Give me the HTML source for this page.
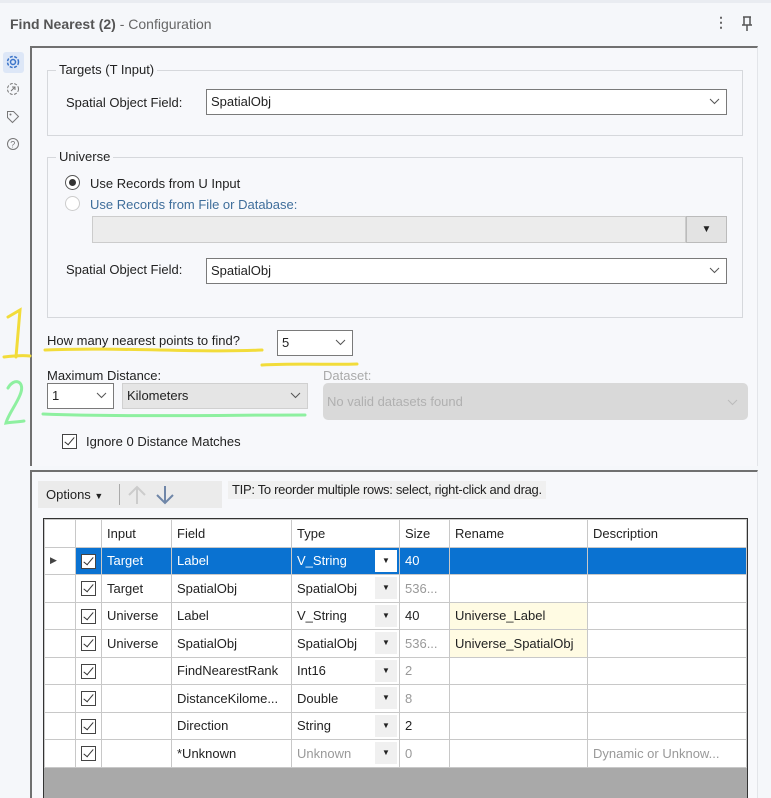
<!DOCTYPE html>
<html><head><meta charset="utf-8"><style>
*{box-sizing:border-box}
body{margin:0;width:771px;height:798px;overflow:hidden;background:#f5f7fa;font-family:"Liberation Sans",sans-serif;font-size:13px;color:#222;position:relative}
.a{position:absolute}
.dd{position:absolute;background:#fff;border:1px solid #7a7a7a;padding:4px 4px;font-size:13px}
.dd svg{position:absolute;right:6px;top:8px}
.grp{position:absolute;border:1px solid #d6d8dc}
.lg{position:absolute;background:#f7f8fb;padding:0 3px;font-size:13px;top:-9px;left:8px}
table{border-collapse:collapse;font-size:13px}
td{border:1px solid #c8c8c8;height:27.5px;padding:0 5px;white-space:nowrap;overflow:hidden}
.cb{width:15px;height:15px;border:1px solid #444;display:inline-block;position:relative;background:#fff;vertical-align:middle}
.cb:after{content:"";position:absolute;left:4px;top:0px;width:4px;height:9px;border:solid #333;border-width:0 1.5px 1.5px 0;transform:rotate(40deg)}
.ty{display:flex;justify-content:space-between;align-items:center;margin-right:-3px}
.ar{width:22px;height:22px;background:#f0f0f0;text-align:center;font-size:8px;line-height:22px;color:#222}
.g{color:#999}
</style></head><body>
<div class="a" style="left:0;top:0;width:771px;height:3px;background:#e9ecf1"></div>
<div class="a" style="left:10px;top:16px;font-size:14px;color:#555"><span style="font-weight:bold;color:#555">Find Nearest (2)</span> <span style="color:#666">- Configuration</span></div>
<div class="a" style="left:714px;top:14px;color:#666;font-size:14px;font-weight:bold">&#8942;</div>
<svg class="a" style="left:740px;top:15px" width="14" height="18" viewBox="0 0 14 18"><path d="M3 2h8M4 2v8h6V2M2 10h10M7 10v6" stroke="#555" stroke-width="1.5" fill="none"/></svg>
<div class="a" style="left:3px;top:52px;width:21px;height:21px;background:#dde7f7;border-radius:3px"></div>
<svg class="a" style="left:5px;top:54px" width="16" height="16" viewBox="0 0 16 16"><circle cx="8" cy="8" r="2.5" stroke="#3b74c9" stroke-width="1.5" fill="none"/><circle cx="8" cy="8" r="5.5" stroke="#3b74c9" stroke-width="1.5" fill="none" stroke-dasharray="3 1.5"/></svg>
<svg class="a" style="left:6px;top:82px" width="14" height="14"><circle cx="7" cy="7" r="5.5" stroke="#777" fill="none" stroke-dasharray="3 1.5"/><path d="M5 9l4-4M6 5h3v3" stroke="#777" fill="none"/></svg>
<svg class="a" style="left:6px;top:110px" width="14" height="14"><path d="M1.5 1.5h6l5 5-6 6-5-5z" stroke="#777" fill="none"/><circle cx="4.5" cy="4.5" r="1" fill="#777"/></svg>
<svg class="a" style="left:6px;top:137px" width="14" height="14"><circle cx="7" cy="7" r="5.5" stroke="#777" fill="none"/><text x="4.3" y="10.5" font-size="9" fill="#777" font-family="Liberation Sans">?</text></svg>
<div class="a" style="left:30px;top:46px;width:728px;height:420px;background:#f7f8fb;border-left:2px solid #707070;border-top:2px solid #707070;border-right:1px solid #e3e5e9"></div>
<div class="grp" style="left:47px;top:70px;width:696px;height:66px"><span class="lg">Targets (T Input)</span></div>
<div class="a" style="left:66px;top:95px">Spatial Object Field:</div>
<div class="dd" style="left:206px;top:89px;width:521px;height:26px">SpatialObj<svg width="11" height="7"><path d="M1 1l4.5 4.5L10 1" stroke="#555" fill="none"/></svg></div>
<div class="grp" style="left:47px;top:157px;width:696px;height:161px"><span class="lg">Universe</span></div>
<div class="a" style="left:65px;top:175px;width:15px;height:15px;border:1px solid #555;border-radius:50%;background:#fff"><div style="margin:3px;width:7px;height:7px;border-radius:50%;background:#333"></div></div>
<div class="a" style="left:90px;top:176px">Use Records from U Input</div>
<div class="a" style="left:65px;top:196px;width:15px;height:15px;border:1px solid #ccc;border-radius:50%;background:#fff"></div>
<div class="a" style="left:90px;top:197px;color:#3f6e9b">Use Records from File or Database:</div>
<div class="a" style="left:92px;top:216px;width:594px;height:27px;background:#ececec;border:1px solid #ccc"></div>
<div class="a" style="left:686px;top:216px;width:41px;height:27px;background:#e3e3e3;border:1px solid #bbb;text-align:center;font-size:10px;line-height:25px">&#9660;</div>
<div class="a" style="left:66px;top:262px">Spatial Object Field:</div>
<div class="dd" style="left:206px;top:258px;width:521px;height:26px">SpatialObj<svg width="11" height="7"><path d="M1 1l4.5 4.5L10 1" stroke="#555" fill="none"/></svg></div>
<div class="a" style="left:47px;top:333px">How many nearest points to find?</div>
<div class="dd" style="left:277px;top:330px;width:76px;height:26px">5<svg width="11" height="7"><path d="M1 1l4.5 4.5L10 1" stroke="#555" fill="none"/></svg></div>
<svg class="a" style="left:0;top:305px" width="370" height="130">
<path d="M8 12 L20 5 L16 52 M4 52 C12 51 22 50 30 51" stroke="#f2dc3a" stroke-width="3" fill="none" stroke-linecap="round"/>
<path d="M45 45 C120 42 200 48 262 45" stroke="#f2dc3a" stroke-width="3" fill="none" stroke-linecap="round"/>
<path d="M262 60 C300 58 330 60 357 59" stroke="#f2dc3a" stroke-width="3" fill="none" stroke-linecap="round"/>
<path d="M8 83 C14 72 26 76 20 90 C16 100 8 110 6 118 C12 117 18 117 24 116" stroke="#8ef0a0" stroke-width="3" fill="none" stroke-linecap="round"/>
<path d="M43 109 C120 112 220 110 305 110" stroke="#8ef0a0" stroke-width="3" fill="none" stroke-linecap="round"/>
</svg>
<div class="a" style="left:47px;top:368px">Maximum Distance:</div>
<div class="dd" style="left:47px;top:383px;width:67px;height:26px">1<svg width="11" height="7"><path d="M1 1l4.5 4.5L10 1" stroke="#555" fill="none"/></svg></div>
<div class="dd" style="left:122px;top:383px;width:186px;height:26px;background:#e5e5e5;border-color:#d0d0d0">Kilometers<svg width="11" height="7"><path d="M1 1l4.5 4.5L10 1" stroke="#555" fill="none"/></svg></div>
<div class="a" style="left:323px;top:368px;color:#aaa">Dataset:</div>
<div class="a" style="left:323px;top:383px;width:425px;height:37px;background:#d9d9d9;border-radius:5px;color:#b0b0b0;padding:11px 4px">No valid datasets found<svg style="position:absolute;right:10px;top:16px" width="11" height="7"><path d="M1 1l4.5 4.5L10 1" stroke="#bbb" fill="none"/></svg></div>
<div class="cb a" style="left:62px;top:433px"></div>
<div class="a" style="left:86px;top:434px">Ignore 0 Distance Matches</div>
<div class="a" style="left:30px;top:470px;width:728px;height:328px;background:#f7f8fb;border-left:2px solid #707070;border-top:2px solid #707070;border-right:1px solid #e3e5e9"></div>
<div class="a" style="left:38px;top:481px;width:184px;height:27px;background:#ebebeb"></div>
<div class="a" style="left:46px;top:487px">Options <span style="font-size:9px">&#9660;</span></div>
<div class="a" style="left:119px;top:484px;width:1px;height:21px;background:#aaa"></div>
<svg class="a" style="left:127px;top:484px" width="50" height="22"><path d="M10 20V3M2 11l8-8 8 8" stroke="#ccc" stroke-width="2" fill="none"/><path d="M38 2v17M30 11l8 8 8-8" stroke="#6f86a8" stroke-width="2" fill="none"/></svg>
<div class="a" style="left:228px;top:481px;height:18px;background:#f0f0f0;padding:1px 4px;font-size:13px;letter-spacing:-0.3px">TIP: To reorder multiple rows: select, right-click and drag.</div>
<div class="a" style="left:43px;top:518px;width:705px;height:280px;background:#a9a9a9;border:1px solid #333;border-bottom:none"></div>
<table class="a" style="left:44px;top:519px;width:703px;table-layout:fixed;background:#fff">
<colgroup><col style="width:31px"><col style="width:26px"><col style="width:70px"><col style="width:120px"><col style="width:108px"><col style="width:50px"><col style="width:138px"><col></colgroup>
<tr><td></td><td></td><td>Input</td><td>Field</td><td>Type</td><td>Size</td><td>Rename</td><td>Description</td></tr>
<tr style="background:#0a72d1;color:#fff"><td style="color:#444;background:#fff;font-size:9px">&#9654;</td><td><span class="cb"></span></td><td>Target</td><td>Label</td><td><div class="ty">V_String<span class="ar" style="background:#fff">&#9660;</span></div></td><td>40</td><td></td><td></td></tr>
<tr><td></td><td><span class="cb"></span></td><td>Target</td><td>SpatialObj</td><td><div class="ty">SpatialObj<span class="ar">&#9660;</span></div></td><td class="g">536...</td><td></td><td></td></tr>
<tr><td></td><td><span class="cb"></span></td><td>Universe</td><td>Label</td><td><div class="ty">V_String<span class="ar">&#9660;</span></div></td><td>40</td><td style="background:#fffbe3">Universe_Label</td><td></td></tr>
<tr><td></td><td><span class="cb"></span></td><td>Universe</td><td>SpatialObj</td><td><div class="ty">SpatialObj<span class="ar">&#9660;</span></div></td><td class="g">536...</td><td style="background:#fffbe3">Universe_SpatialObj</td><td></td></tr>
<tr><td></td><td><span class="cb"></span></td><td></td><td>FindNearestRank</td><td><div class="ty">Int16<span class="ar">&#9660;</span></div></td><td class="g">2</td><td></td><td></td></tr>
<tr><td></td><td><span class="cb"></span></td><td></td><td>DistanceKilome...</td><td><div class="ty">Double<span class="ar">&#9660;</span></div></td><td class="g">8</td><td></td><td></td></tr>
<tr><td></td><td><span class="cb"></span></td><td></td><td>Direction</td><td><div class="ty">String<span class="ar">&#9660;</span></div></td><td>2</td><td></td><td></td></tr>
<tr><td></td><td><span class="cb"></span></td><td></td><td>*Unknown</td><td><div class="ty"><span class="g">Unknown</span><span class="ar">&#9660;</span></div></td><td class="g">0</td><td></td><td class="g">Dynamic or Unknow...</td></tr>
</table>
</body></html>
